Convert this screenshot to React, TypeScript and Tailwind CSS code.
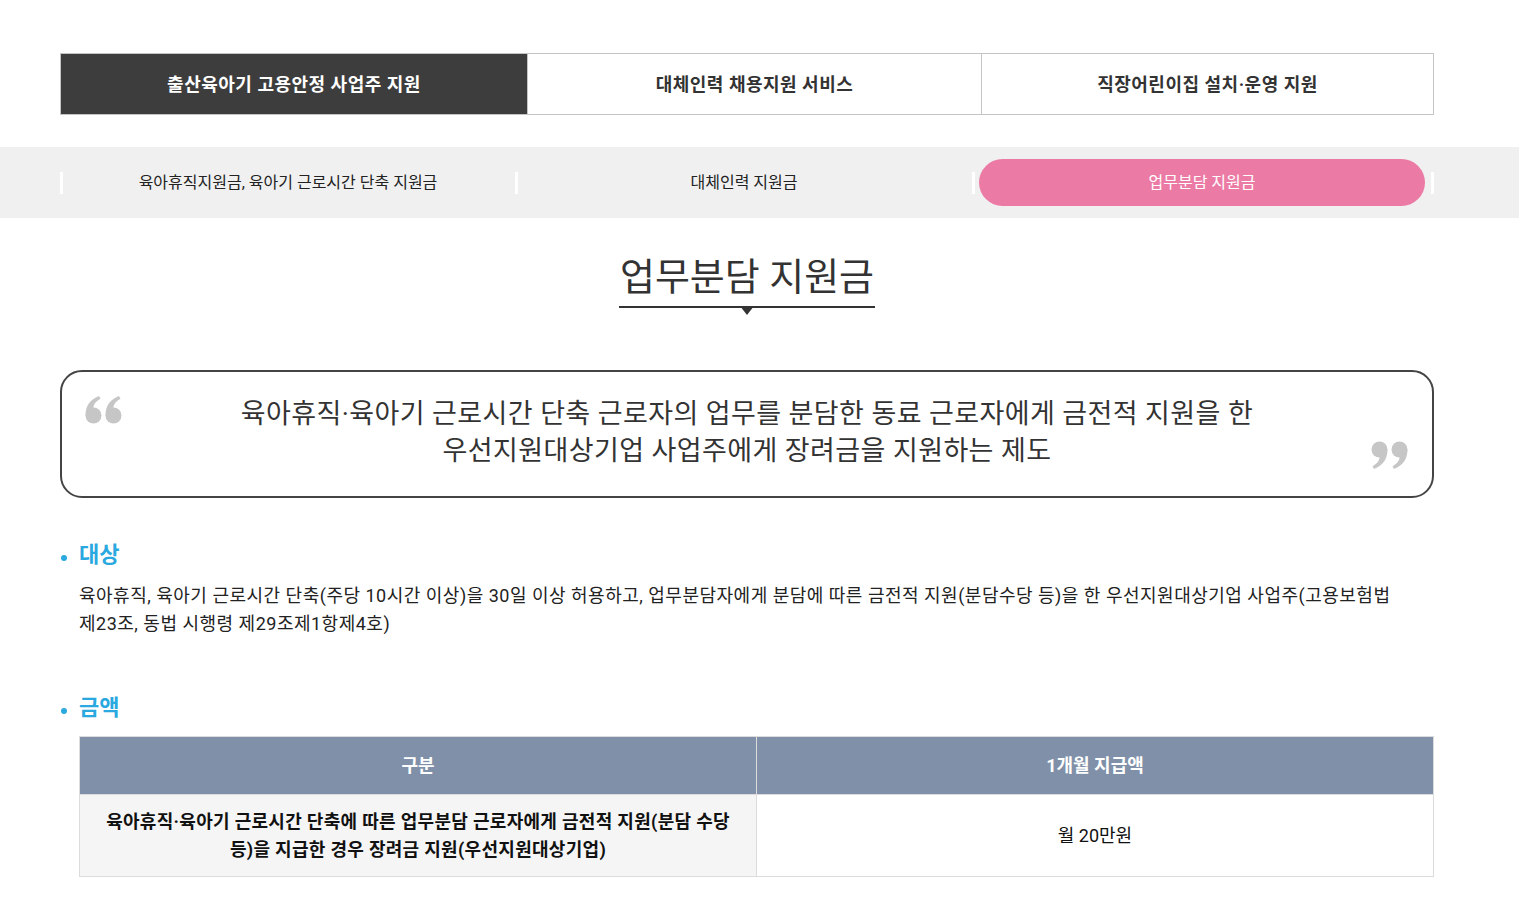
import React from 'react';

const font = { fontFamily: 'Roboto, "Noto Sans CJK KR", "Noto Sans", sans-serif' };

const topTabs = [
  { label: '출산육아기 고용안정 사업주 지원', w: 'w-[466px]', active: true },
  { label: '대체인력 채용지원 서비스', w: 'w-[454px]', active: false },
  { label: '직장어린이집 설치·운영 지원', w: 'flex-1', active: false },
];

const subTabs = [
  { label: '육아휴직지원금, 육아기 근로시간 단축 지원금', w: 'w-[455px]', active: false },
  { label: '대체인력 지원금', w: 'w-[457px]', active: false },
  { label: '업무분담 지원금', w: 'flex-1', active: true },
];

const QuoteMark = ({ flip }: { flip?: boolean }) => (
  <svg
    width="37"
    height="28"
    viewBox="0 0 37 28"
    className={flip ? 'rotate-180' : ''}
    fill="#c6c6c6"
  >
    {[0, 20].map((x) => (
      <g key={x} transform={`translate(${x} 0)`}>
        <circle cx="8.5" cy="19.5" r="8" />
        <path d="M0.6 19.5 C0.4 10 5 3.5 14 0 L15.5 2.8 C10.5 5.5 8.3 9 8.5 12 Z" />
      </g>
    ))}
  </svg>
);

const SectionTitle = ({ children }: { children: React.ReactNode }) => (
  <div className="flex items-center">
    <span className="ml-[1px] w-[6px] h-[6px] rounded-full bg-[#2aa8e0] mt-[5px]" />
    <h3 className="ml-[12px] text-[22px] leading-[30px] font-bold text-[#2aa8e0]">{children}</h3>
  </div>
);

export default function App() {
  return (
    <div className="min-h-screen bg-white text-[#222]" style={font}>
      {/* 상단 탭 */}
      <div className="pt-[53px] px-[60px]">
        <div className="flex h-[62px] border border-[#c4c4c4] w-[1374px]">
          {topTabs.map((t, i) => (
            <div
              key={t.label}
              className={`${t.w} flex items-center justify-center text-[18px] tracking-[0.5px] font-bold ${
                t.active ? 'bg-[#3d3d3d] text-white' : 'bg-white text-[#333]'
              } ${i > 0 ? 'border-l border-[#c4c4c4]' : ''}`}
            >
              {t.label}
            </div>
          ))}
        </div>
      </div>

      {/* 하위 탭 */}
      <div className="mt-[32px] h-[71px] bg-[#f0f0f0] px-[60px]">
        <div className="flex h-full w-[1374px]">
          {subTabs.map((t, i) => (
            <div key={t.label} className={`${t.w} flex items-center`}>
              <span className="w-[3px] h-[22px] bg-white" />
              <div className="flex-1 pl-[4px] pr-[6px]">
                {t.active ? (
                  <div className="h-[47px] rounded-full bg-[#eb7aa5] flex items-center justify-center text-[16px] text-white">
                    {t.label}
                  </div>
                ) : (
                  <div className="h-[47px] flex items-center justify-center text-[16px] text-[#222]">
                    {t.label}
                  </div>
                )}
              </div>
              {i === subTabs.length - 1 && <span className="w-[3px] h-[22px] bg-white" />}
            </div>
          ))}
        </div>
      </div>

      <div className="px-[60px] pb-[30px]">
        <div className="w-[1374px]">
          {/* 제목 */}
          <div className="mt-[35px] flex justify-center">
            <div className="relative border-b-2 border-[#333] pb-[5px] px-[1px]">
              <h2 className="text-[38px] leading-[48px] text-[#333]">업무분담 지원금</h2>
              <span className="absolute left-1/2 -translate-x-1/2 top-full w-0 h-0 border-l-[7px] border-r-[7px] border-t-[9px] border-l-transparent border-r-transparent border-t-[#333]" />
            </div>
          </div>

          {/* 인용 박스 */}
          <div className="relative mt-[62px] border-2 border-[#444] rounded-[22px] pt-[24px] pb-[26px]">
            <div className="absolute left-[23px] top-[24px]">
              <QuoteMark />
            </div>
            <p className="text-center text-[27px] tracking-[0.4px] leading-[37px] text-[#333]">
              육아휴직·육아기 근로시간 단축 근로자의 업무를 분담한 동료 근로자에게 금전적 지원을 한
              <br />
              우선지원대상기업 사업주에게 장려금을 지원하는 제도
            </p>
            <div className="absolute right-[24px] bottom-[27px]">
              <QuoteMark flip />
            </div>
          </div>

          {/* 대상 */}
          <div className="mt-[42px]">
            <SectionTitle>대상</SectionTitle>
            <p className="mt-[12px] ml-[19px] text-[18px] tracking-[0.5px] leading-[28px] text-[#222] break-keep">
              육아휴직, 육아기 근로시간 단축(주당 10시간 이상)을 30일 이상 허용하고, 업무분담자에게 분담에 따른 금전적 지원(분담수당 등)을 한 우선지원대상기업 사업주(고용보험법 제23조, 동법 시행령 제29조제1항제4호)
            </p>
          </div>

          {/* 금액 */}
          <div className="mt-[55px]">
            <SectionTitle>금액</SectionTitle>
            <table className="mt-[13px] ml-[19px] w-[1355px] border-collapse table-fixed">
              <thead>
                <tr className="h-[58px] bg-[#7f90a8] text-white text-[18px] font-bold">
                  <th className="w-1/2 border border-[#dcdcdc]">구분</th>
                  <th className="w-1/2 border border-[#dcdcdc]">1개월 지급액</th>
                </tr>
              </thead>
              <tbody>
                <tr className="h-[82px] text-[18px]">
                  <td className="bg-[#f5f5f5] border border-[#dcdcdc] font-bold text-center leading-[28px] tracking-[0.3px] text-[#111] px-[16px] break-keep">
                    육아휴직·육아기 근로시간 단축에 따른 업무분담 근로자에게 금전적 지원(분담 수당 등)을 지급한 경우 장려금 지원(우선지원대상기업)
                  </td>
                  <td className="bg-white border border-[#dcdcdc] text-center text-[#111]">월 20만원</td>
                </tr>
              </tbody>
            </table>
          </div>
        </div>
      </div>
    </div>
  );
}
